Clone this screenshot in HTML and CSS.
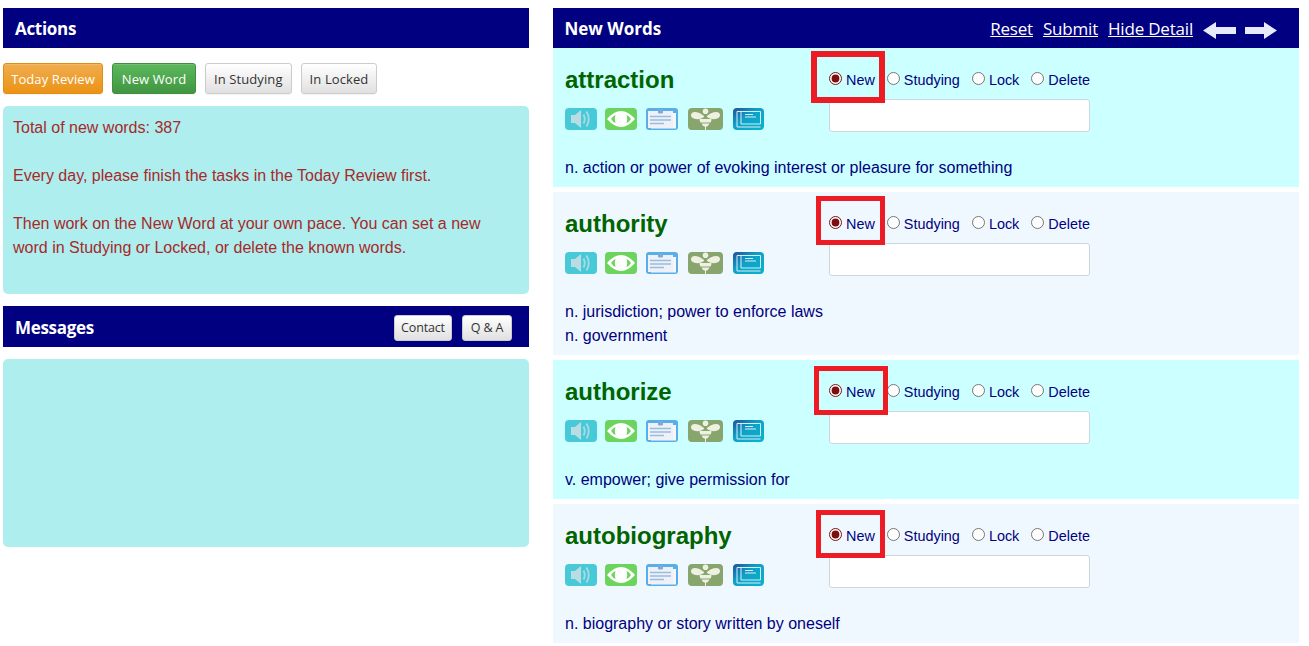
FILE: index.html
```html
<!DOCTYPE html>
<html lang="en">
<head>
<meta charset="utf-8">
<title>New Words</title>
<link rel="stylesheet" href="styles.css">
</head>
<body>
<svg class="defs" width="0" height="0" aria-hidden="true">
  <defs>
    <linearGradient id="bookGrad" x1="0" y1="0" x2="1" y2="1">
      <stop offset="0" stop-color="#1f4f9c"/>
      <stop offset="0.42" stop-color="#10a0c8"/>
      <stop offset="1" stop-color="#08b4cc"/>
    </linearGradient>
    <symbol id="i-sound" viewBox="0 0 32 22">
      <rect width="32" height="22" rx="4" fill="#48c9d8"/>
      <path d="M6 7h4l6-5v18l-6-5H6z" fill="#b9dde3"/>
      <path d="M18.500 6.500q2.500 4.500 0 9M21.500 3.500q4.500 7.500 0 15" fill="none" stroke="#a9dbe2" stroke-width="1.800"/>
    </symbol>
    <symbol id="i-eye" viewBox="0 0 32 22">
      <rect width="32" height="22" rx="4" fill="#6cd35c"/>
      <path d="M2 11Q9 3 16 3t14 8q-7 8-14 8T2 11z" fill="#fff"/>
      <path d="M6 11q2-3 4.500-4-1.500 4 0 8Q8 14 6 11zM26 11q-2-3-4.500-4 1.500 4 0 8 2.500-1 4.500-4z" fill="#6cd35c"/>
    </symbol>
    <symbol id="i-card" viewBox="0 0 32 22">
      <rect width="32" height="22" rx="3" fill="#5aaee8"/>
      <rect x="2" y="3" width="25" height="17" fill="#eef2f8"/>
      <path d="M27 5h3v15.500H5V20h22z" fill="#f4f6fa"/>
      <rect x="12" y="1.500" width="5" height="4" rx="1" fill="#7fa9dc"/>
      <path d="M4 8.500h21M4 12h21M4 15.500h14" stroke="#9dbbdc" stroke-width="1.300"/>
    </symbol>
    <symbol id="i-bee" viewBox="0 0 35 22">
      <rect width="35" height="22" rx="4" fill="#87a56d"/>
      <circle cx="17.500" cy="3.300" r="2.800" fill="#eef1e2"/>
      <path d="M16 8C10 2.500 3 3 3 7s7 6 13 2zM19 8c6-5.500 13-5 13-1s-7 6-13 2z" fill="#eef1e2"/>
      <path d="M11.500 11h12q0 2-1 3.500h-10q-1-1.500-1-3.500zM13.500 15.500h8q-1 3-4 3.500-3-.5-4-3.500z" fill="#eef1e2"/>
      <path d="M17.500 18.500v3.500" stroke="#eef1e2"/>
    </symbol>
    <symbol id="i-book" viewBox="0 0 31 22">
      <rect width="31" height="22" rx="4" fill="url(#bookGrad)"/>
      <path d="M4 3.500h23.500V16H8V3.500M4 3.500V19h23.500" fill="none" stroke="#d8eef6" stroke-width="1"/>
      <path d="M12 6.500h8M12 9h11" stroke="#d8eef6" stroke-width="1"/>
    </symbol>
    <symbol id="i-left" viewBox="0 0 33 17">
      <path d="M0 8.500 13 0v5h20v7H13v5z" fill="#e6eafa"/>
    </symbol>
    <symbol id="i-right" viewBox="0 0 32 17">
      <path d="M32 8.500 19 0v5H0v7h19v5z" fill="#e6eafa"/>
    </symbol>
  </defs>
</svg>

<main class="page">
  <section class="col-left">
    <header class="bar">
      <h2 class="bar-title">Actions</h2>
    </header>
    <div class="actions">
      <button class="btn btn-orange" type="button">Today Review</button>
      <button class="btn btn-green" type="button">New Word</button>
      <button class="btn btn-grey" type="button">In Studying</button>
      <button class="btn btn-grey" type="button">In Locked</button>
    </div>
    <div class="panel panel-info">
      <p>Total of new words: 387</p>
      <p>Every day, please finish the tasks in the Today Review first.</p>
      <p>Then work on the New Word at your own pace. You can set a new word in Studying or Locked, or delete the known words.</p>
    </div>
    <header class="bar bar-messages">
      <h2 class="bar-title">Messages</h2>
      <div class="bar-buttons">
        <button class="btn btn-grey btn-small btn-contact" type="button">Contact</button>
        <button class="btn btn-grey btn-small btn-qa" type="button">Q &amp; A</button>
      </div>
    </header>
    <div class="panel panel-messages"></div>
  </section>

  <section class="col-right">
    <header class="bar bar-words">
      <h2 class="bar-title">New Words</h2>
      <nav class="bar-links">
        <a href="#">Reset</a>
        <a href="#">Submit</a>
        <a href="#">Hide Detail</a>
        <span class="arrows">
          <svg class="arrow arrow-left"><use href="#i-left"/></svg>
          <svg class="arrow arrow-right"><use href="#i-right"/></svg>
        </span>
      </nav>
    </header>

    <article class="word word-cyan">
      <div class="word-head">
        <div class="word-main">
          <h3 class="word-title">attraction</h3>
          <div class="icons">
            <svg class="icon"><use href="#i-sound"/></svg>
            <svg class="icon icon-eye"><use href="#i-eye"/></svg>
            <svg class="icon"><use href="#i-card"/></svg>
            <svg class="icon icon-bee"><use href="#i-bee"/></svg>
            <svg class="icon icon-book"><use href="#i-book"/></svg>
          </div>
        </div>
        <form class="word-form">
          <div class="options">
            <label><input type="radio" name="w1" checked>New</label>
            <label><input type="radio" name="w1">Studying</label>
            <label><input type="radio" name="w1">Lock</label>
            <label><input type="radio" name="w1">Delete</label>
          </div>
          <input class="note" type="text">
        </form>
      </div>
      <p class="def">n. action or power of evoking interest or pleasure for something</p>
      <span class="mark mark-1"></span>
    </article>

    <article class="word word-alice">
      <div class="word-head">
        <div class="word-main">
          <h3 class="word-title">authority</h3>
          <div class="icons">
            <svg class="icon"><use href="#i-sound"/></svg>
            <svg class="icon icon-eye"><use href="#i-eye"/></svg>
            <svg class="icon"><use href="#i-card"/></svg>
            <svg class="icon icon-bee"><use href="#i-bee"/></svg>
            <svg class="icon icon-book"><use href="#i-book"/></svg>
          </div>
        </div>
        <form class="word-form">
          <div class="options">
            <label><input type="radio" name="w2" checked>New</label>
            <label><input type="radio" name="w2">Studying</label>
            <label><input type="radio" name="w2">Lock</label>
            <label><input type="radio" name="w2">Delete</label>
          </div>
          <input class="note" type="text">
        </form>
      </div>
      <p class="def">n. jurisdiction; power to enforce laws</p>
      <p class="def">n. government</p>
      <span class="mark mark-2"></span>
    </article>

    <article class="word word-cyan">
      <div class="word-head">
        <div class="word-main">
          <h3 class="word-title">authorize</h3>
          <div class="icons">
            <svg class="icon"><use href="#i-sound"/></svg>
            <svg class="icon icon-eye"><use href="#i-eye"/></svg>
            <svg class="icon"><use href="#i-card"/></svg>
            <svg class="icon icon-bee"><use href="#i-bee"/></svg>
            <svg class="icon icon-book"><use href="#i-book"/></svg>
          </div>
        </div>
        <form class="word-form">
          <div class="options">
            <label><input type="radio" name="w3" checked>New</label>
            <label><input type="radio" name="w3">Studying</label>
            <label><input type="radio" name="w3">Lock</label>
            <label><input type="radio" name="w3">Delete</label>
          </div>
          <input class="note" type="text">
        </form>
      </div>
      <p class="def">v. empower; give permission for</p>
      <span class="mark mark-3"></span>
    </article>

    <article class="word word-alice">
      <div class="word-head">
        <div class="word-main">
          <h3 class="word-title">autobiography</h3>
          <div class="icons">
            <svg class="icon"><use href="#i-sound"/></svg>
            <svg class="icon icon-eye"><use href="#i-eye"/></svg>
            <svg class="icon"><use href="#i-card"/></svg>
            <svg class="icon icon-bee"><use href="#i-bee"/></svg>
            <svg class="icon icon-book"><use href="#i-book"/></svg>
          </div>
        </div>
        <form class="word-form">
          <div class="options">
            <label><input type="radio" name="w4" checked>New</label>
            <label><input type="radio" name="w4">Studying</label>
            <label><input type="radio" name="w4">Lock</label>
            <label><input type="radio" name="w4">Delete</label>
          </div>
          <input class="note" type="text">
        </form>
      </div>
      <p class="def">n. biography or story written by oneself</p>
      <span class="mark mark-4"></span>
    </article>
  </section>
</main>
</body>
</html>
```

FILE: styles.css
```css
* { box-sizing: border-box; }

html, body {
  margin: 0;
  padding: 0;
  background: #fff;
}

body {
  font-family: "Liberation Sans", Arial, sans-serif;
  font-size: 16px;
  line-height: 24px;
  overflow: hidden;
}

.defs {
  position: absolute;
}

.page {
  display: flex;
  gap: 24px;
  padding: 8px 10px 0 3px;
}

.col-left {
  flex: 0 0 526px;
}

.col-right {
  flex: 0 0 746px;
}

.bar {
  display: flex;
  align-items: center;
  justify-content: space-between;
  height: 40px;
  padding: 2px 12px 0;
  background: #000080;
  color: #fff;
}

.bar-messages {
  height: 41px;
  margin-top: 12px;
  padding-right: 17px;
}

.bar-words {
  padding-left: 11.500px;
}

.bar-words .bar-title {
  letter-spacing: 0;
}

.bar-title {
  margin: 0;
  font-family: "Open Sans", sans-serif;
  font-size: 17px;
  font-weight: 700;
  line-height: 24px;
  letter-spacing: -0.3px;
}

.bar-buttons {
  display: flex;
  gap: 10px;
}

.bar-links {
  display: flex;
  align-items: center;
  gap: 10px;
  font-family: "Open Sans", sans-serif;
  font-size: 17px;
  letter-spacing: -0.2px;
}

.bar-links a {
  color: #fff;
}

.arrows {
  display: flex;
  gap: 9px;
  margin-top: 3px;
  margin-right: 10px;
}

.arrow {
  display: block;
  height: 17px;
}

.arrow-left { width: 33px; }
.arrow-right { width: 32px; }

.actions {
  display: flex;
  gap: 9px;
  padding: 15px 0 12px;
}

.btn {
  height: 31px;
  padding: 1px 8px 0;
  border: 1px solid #ccc;
  border-radius: 3px;
  font-family: "Open Sans", sans-serif;
  font-size: 13px;
  letter-spacing: 0.1px;
  line-height: 1;
  white-space: nowrap;
  color: #333;
  box-shadow: inset 0 1px 0 rgba(255, 255, 255, 0.15), 0 1px 1px rgba(0, 0, 0, 0.05);
}

.btn-orange {
  width: 100px;
  padding: 1px 0 0;
  color: #fff;
  border-color: #e38d13;
  background: linear-gradient(#f0ad4e, #eb9316);
}

.btn-green {
  width: 84px;
  padding: 1px 0 0;
  color: #fff;
  border-color: #3e8f3e;
  background: linear-gradient(#5cb85c, #419641);
}

.btn-grey {
  background: linear-gradient(#fff, #e0e0e0);
  border-color: #ccc;
}

.btn-small {
  height: 26px;
  padding: 1px 0 0;
  font-size: 12.500px;
  letter-spacing: -0.15px;
}

.btn-contact { width: 58px; }
.btn-qa { width: 50px; }

.panel {
  border-radius: 5px;
  background: #afeeee;
}

.panel-info {
  height: 188px;
  padding: 10px 10px 0;
  color: #a52a2a;
}

.panel-info p {
  margin: 0 0 24px;
}

.panel-messages {
  height: 188px;
  margin-top: 12px;
}

.word {
  position: relative;
  padding: 0 12px 7px;
}

.word + .word {
  margin-top: 5px;
}

.word-cyan { background: #ccffff; }
.word-alice { background: #f0f8ff; }

.word-head {
  display: flex;
  height: 108px;
}

.word-main {
  flex: 0 0 264px;
}

.word-title {
  margin: 0;
  padding-top: 16px;
  font-size: 24px;
  font-weight: 700;
  line-height: 32px;
  color: #006400;
}

.icons {
  display: flex;
  gap: 9px;
  margin-top: 12px;
}

.icon {
  display: block;
  width: 32px;
  height: 22px;
}

.icon-eye {
  margin-left: -1px;
}

.icon-bee {
  width: 35px;
  margin-left: 1px;
}

.icon-book {
  width: 31px;
  margin-left: 1px;
}

.word-form {
  flex: 0 0 261px;
  padding-top: 20px;
}

.options {
  display: flex;
  justify-content: space-between;
  height: 24px;
  margin-bottom: 7px;
  font-size: 14.400px;
  line-height: 24px;
  color: #000080;
}

.options label {
  display: flex;
  align-items: center;
  gap: 4px;
}

.options input {
  width: 13px;
  height: 13px;
  margin: 0 0 4px;
  accent-color: #7b1010;
}

.note {
  display: block;
  width: 100%;
  height: 33px;
  border: 1px solid #ccd6dc;
  border-radius: 3px;
  background: #fff;
}

.def {
  margin: 0;
  color: #000080;
}

.mark {
  position: absolute;
  border: 5px solid #ed1c24;
  pointer-events: none;
}

.mark-1 { left: 258px; top: 3px; width: 74px; height: 52px; border-width: 6px; }
.mark-2 { left: 263px; top: 4px; width: 69px; height: 49px; }
.mark-3 { left: 261px; top: 6px; width: 74px; height: 49px; }
.mark-4 { left: 263px; top: 6px; width: 69px; height: 48px; }
```
